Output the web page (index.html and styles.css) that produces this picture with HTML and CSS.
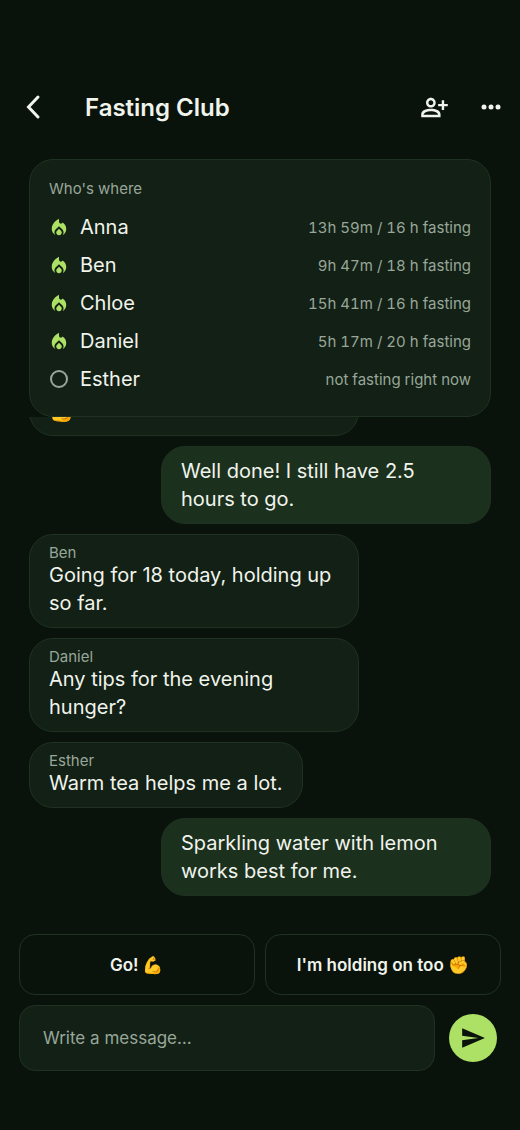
FILE: index.html
```html
<!DOCTYPE html>
<html lang="en">
<head>
<meta charset="utf-8">
<meta name="viewport" content="width=device-width, initial-scale=1">
<title>Fasting Club</title>
<link rel="stylesheet" href="styles.css">
</head>
<body>
<svg class="sprite" aria-hidden="true">
  <symbol id="flame" viewBox="1 0 22 22">
    <path d="M12 12.9l-2.13 2.09C9.31 15.55 9 16.28 9 17.06 9 18.68 10.35 20 12 20s3-1.32 3-2.94c0-.78-.31-1.52-.87-2.07L12 12.9z"/>
    <path d="M16 6l-.44.55C14.38 8.02 12 7.19 12 5.3V2S4 6 4 13c0 2.92 1.56 5.47 3.89 6.86-.56-.79-.89-1.76-.89-2.8 0-1.32.52-2.56 1.47-3.5L12 10.1l3.53 3.47c.95.93 1.47 2.17 1.47 3.5 0 1.02-.31 1.96-.85 2.75 1.89-1.15 3.29-3.06 3.71-5.3.66-3.55-1.07-6.9-3.86-8.52z"/>
  </symbol>
</svg>
<div class="app">
  <header class="topbar">
    <button class="icon-btn" type="button" aria-label="Back">
      <svg width="28" height="28" viewBox="0 0 28 28" fill="none" stroke="currentColor" stroke-width="3" stroke-linecap="round"><path d="M18 4 8.500 14l9.500 10"/></svg>
    </button>
    <h1 class="title">Fasting Club</h1>
    <button class="icon-btn" type="button" aria-label="Add person">
      <svg width="29" height="29" viewBox="0 0 24 24" fill="currentColor"><path d="M13 8c0-2.210-1.790-4-4-4S5 5.790 5 8s1.790 4 4 4 4-1.790 4-4zm-2 0c0 1.100-.9 2-2 2s-2-.9-2-2 .9-2 2-2 2 .9 2 2zM1 17.500V20h16v-2.500c0-3-4-4.500-8-4.500s-8 1.500-8 4.500zm2 .5c0-1.800 3-3 6-3s6 1.200 6 3H3zM20 14v-3h3V9h-3V6h-2v3h-3v2h3v3h2z"/></svg>
    </button>
    <button class="icon-btn" type="button" aria-label="More">
      <svg width="28" height="28" viewBox="0 0 28 28" fill="currentColor"><circle cx="7" cy="14" r="2.500"/><circle cx="14" cy="14" r="2.500"/><circle cx="21" cy="14" r="2.500"/></svg>
    </button>
  </header>

  <section class="status">
    <h2 class="status-title">Who's where</h2>
    <ul class="members">
      <li class="member"><svg class="flame"><use href="#flame"/></svg><span class="name">Anna</span><span class="state">13h 59m / 16 h fasting</span></li>
      <li class="member"><svg class="flame"><use href="#flame"/></svg><span class="name">Ben</span><span class="state">9h 47m / 18 h fasting</span></li>
      <li class="member"><svg class="flame"><use href="#flame"/></svg><span class="name">Chloe</span><span class="state">15h 41m / 16 h fasting</span></li>
      <li class="member"><svg class="flame"><use href="#flame"/></svg><span class="name">Daniel</span><span class="state">5h 17m / 20 h fasting</span></li>
      <li class="member"><span class="idle"></span><span class="name">Esther</span><span class="state">not fasting right now</span></li>
    </ul>
  </section>

  <main class="chat">
    <div class="messages">
      <article class="bubble wide"><p class="text">💪</p></article>
      <article class="bubble mine"><p class="text">Well done! I still have 2.5 hours to go.</p></article>
      <article class="bubble"><h3 class="author">Ben</h3><p class="text">Going for 18 today, holding up so far.</p></article>
      <article class="bubble"><h3 class="author">Daniel</h3><p class="text">Any tips for the evening hunger?</p></article>
      <article class="bubble"><h3 class="author">Esther</h3><p class="text">Warm tea helps me a lot.</p></article>
      <article class="bubble mine"><p class="text">Sparkling water with lemon works best for me.</p></article>
    </div>
  </main>

  <footer class="composer">
    <div class="replies">
      <button class="reply" type="button">Go! 💪</button>
      <button class="reply" type="button">I'm holding on too ✊</button>
    </div>
    <form class="entry">
      <input class="field" type="text" placeholder="Write a message…" aria-label="Write a message">
      <button class="send" type="button" aria-label="Send">
        <svg width="26" height="26" viewBox="0 0 24 24" fill="currentColor"><path d="M2.010 21 23 12 2.010 3 2 10l15 2-15 2z"/></svg>
      </button>
    </form>
  </footer>
</div>
</body>
</html>
```
FILE: styles.css
```css
:root {
  --bg: #09130b;
  --surface: #132015;
  --line: #1f3222;
  --mine: #1c301e;
  --text: #f0f4ec;
  --muted: #98a799;
  --accent: #ade165;
}
* { box-sizing: border-box; }
body {
  margin: 0;
  background: var(--bg);
  color: var(--text);
  font-family: Inter, "Noto Color Emoji", sans-serif;
}
h1, h2, h3, p, ul { margin: 0; padding: 0; font-weight: 400; }
button, input { font: inherit; color: inherit; }
button { padding: 0; border: 0; background: none; cursor: pointer; }
.sprite { display: none; }
.app {
  display: flex;
  flex-direction: column;
  height: 100vh;
}
.topbar {
  display: flex;
  align-items: center;
  gap: 9px;
  padding: 83px 5px 28px 10px;
}
.icon-btn {
  display: grid;
  place-items: center;
  width: 48px;
  height: 48px;
}
.title {
  flex: 1;
  margin-left: 18px;
  padding-top: 2px;
  font-size: 24px;
  line-height: 32px;
  font-weight: 600;
}
.status {
  margin: 0 29px;
  padding: 19px 19px 23px;
  border: 1px solid var(--line);
  border-radius: 24px;
  background: var(--surface);
}
.status-title {
  margin-bottom: 14px;
  font-size: 15px;
  line-height: 20px;
  color: var(--muted);
}
.members {
  display: grid;
  gap: 10px;
  list-style: none;
}
.member {
  display: flex;
  align-items: center;
  height: 28px;
}
.flame {
  width: 20px;
  height: 20px;
  fill: var(--accent);
}
.idle {
  width: 18px;
  height: 18px;
  margin: 0 1px;
  border: 2px solid var(--muted);
  border-radius: 50%;
}
.name {
  flex: 1;
  margin-left: 11px;
  font-size: 20px;
  line-height: 28px;
}
.state {
  font-size: 15px;
  font-variant-numeric: tabular-nums;
  color: var(--muted);
}
.chat {
  flex: 1;
  display: flex;
  flex-direction: column-reverse;
  min-height: 0;
  overflow-y: auto;
  scrollbar-width: none;
}
.messages {
  display: flex;
  flex-direction: column;
  align-items: flex-start;
  gap: 10px;
  padding: 0 29px 38px;
}
.bubble {
  max-width: 330px;
  padding: 10px 19px;
  border: 1px solid var(--line);
  border-radius: 24px;
  background: var(--surface);
}
.wide { width: 100%; }
.mine {
  align-self: flex-end;
  width: 100%;
  background: var(--mine);
}
.author {
  font-size: 15px;
  line-height: 16px;
  color: var(--muted);
}
.text {
  font-size: 20px;
  line-height: 28px;
}
.composer {
  display: grid;
  gap: 10px;
  padding: 0 19px 59px;
}
.replies {
  display: grid;
  grid-template-columns: 1fr 1fr;
  gap: 10px;
}
.reply {
  height: 61px;
  border: 1px solid var(--line);
  border-radius: 16px;
  font-size: 17px;
  font-weight: 600;
}
.entry {
  display: flex;
  align-items: center;
  gap: 14px;
  padding-right: 4px;
}
.field {
  flex: 1;
  min-width: 0;
  height: 66px;
  padding: 0 23px;
  border: 1px solid var(--line);
  border-radius: 16px;
  background: var(--surface);
  font-size: 17px;
}
.field::placeholder { color: var(--muted); opacity: 1; }
.send {
  display: grid;
  place-items: center;
  width: 48px;
  height: 48px;
  border-radius: 50%;
  background: var(--accent);
  color: var(--bg);
}
```
